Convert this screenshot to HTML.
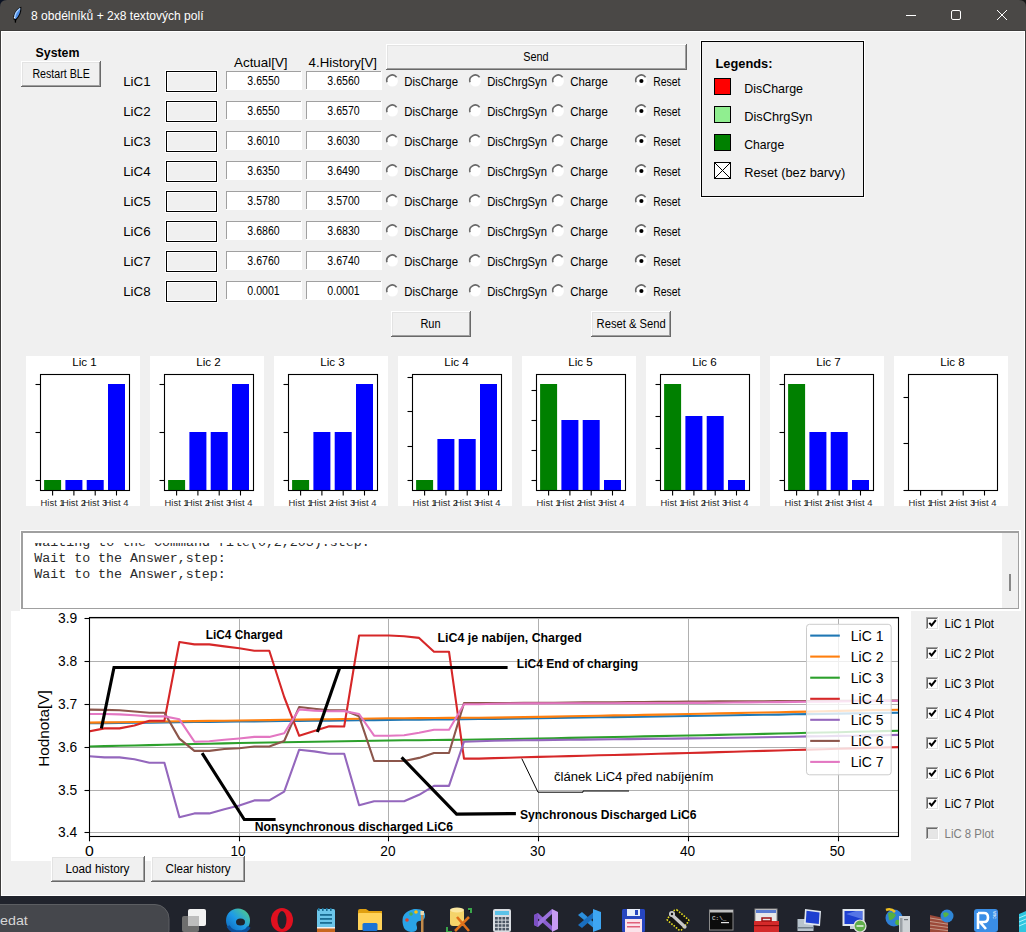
<!DOCTYPE html>
<html><head><meta charset="utf-8"><title>8 obdélníků + 2x8 textových polí</title>
<style>html,body{margin:0;padding:0;width:1026px;height:932px;overflow:hidden;background:#1f2331}svg text{font-family:"Liberation Sans",sans-serif}svg text[font-family="Liberation Mono"]{font-family:"Liberation Mono",monospace}</style>
</head><body>
<svg width="1026" height="932" viewBox="0 0 1026 932" shape-rendering="crispEdges" font-family="Liberation Sans" style="display:block">
<rect x="0" y="0" width="1026" height="932" fill="#1f2331" />
<rect x="0" y="0" width="18" height="18" fill="#0b1222" />
<rect x="1008" y="0" width="18" height="18" fill="#181818" />
<rect x="0" y="8" width="1026" height="888" fill="#3d3c3b" />
<rect x="1" y="31" width="1024" height="865" fill="#ffffff" />
<rect x="2" y="32" width="1022" height="863" fill="#f0f0f0" />
<path d="M0 7 Q0 0 7 0 L1019 0 Q1026 0 1026 7 L1026 30 L0 30 Z" fill="#4a4846" shape-rendering="geometricPrecision"/>
<rect x="0" y="30" width="1026" height="1" fill="#3d3c3b" />
<g shape-rendering="geometricPrecision"><path d="M14.2 19.5 C13 14 16.5 9.5 20.8 7.6 C21.2 12 19 16.5 15.8 19.8 Z" fill="#4f8fe8" stroke="#050505" stroke-width="1.1"/><path d="M14.8 17.5 C15 13.5 17 10.5 20.2 8.4" stroke="#a9d0ff" stroke-width="1.4" fill="none"/><path d="M15.6 19 L15.4 22.6" stroke="#000" stroke-width="1.3"/><circle cx="14.5" cy="17.8" r="0.7" fill="#fff"/></g>
<text x="31" y="19.5" font-size="12.5" fill="#ffffff" textLength="172.5" lengthAdjust="spacingAndGlyphs" >8 obdélníků + 2x8 textových polí</text>
<rect x="906" y="15" width="10" height="1" fill="#ffffff" />
<rect x="951.5" y="10.5" width="9" height="9" rx="1.5" fill="none" stroke="#ffffff" stroke-width="1" shape-rendering="geometricPrecision"/>
<path d="M997 10 L1007 20 M1007 10 L997 20" stroke="#ffffff" stroke-width="1" shape-rendering="geometricPrecision"/>
<text x="35.5" y="57" font-size="13" font-weight="bold" textLength="44" lengthAdjust="spacingAndGlyphs" >System</text>
<rect x="21" y="61" width="80" height="26" fill="#696969" />
<rect x="21" y="61" width="79" height="25" fill="#ffffff" />
<rect x="22" y="62" width="78" height="24" fill="#a0a0a0" />
<rect x="22" y="62" width="77" height="23" fill="#e3e3e3" />
<rect x="23" y="63" width="76" height="22" fill="#f0f0f0" />
<text x="32.4" y="78" font-size="12" textLength="57.5" lengthAdjust="spacingAndGlyphs" >Restart BLE</text>
<text x="234" y="67" font-size="13.33" textLength="53.6" lengthAdjust="spacingAndGlyphs" >Actual[V]</text>
<text x="308.6" y="67" font-size="13.33" textLength="68.4" lengthAdjust="spacingAndGlyphs" >4.History[V]</text>
<rect x="386" y="44" width="301" height="26" fill="#696969" />
<rect x="386" y="44" width="300" height="25" fill="#ffffff" />
<rect x="387" y="45" width="299" height="24" fill="#a0a0a0" />
<rect x="387" y="45" width="298" height="23" fill="#e3e3e3" />
<rect x="388" y="46" width="297" height="22" fill="#f0f0f0" />
<text x="523.2" y="61" font-size="12" textLength="25.4" lengthAdjust="spacingAndGlyphs" >Send</text>
<text x="123.2" y="86" font-size="13.33" >LiC1</text>
<rect x="165" y="70" width="53" height="23" fill="#ffffff" />
<rect x="166" y="71" width="51" height="21" fill="#000000" />
<rect x="167" y="72" width="49" height="19" fill="#ffffff" />
<rect x="168" y="73" width="47" height="17" fill="#f0f0f0" />
<rect x="226" y="71" width="76" height="19" fill="#ffffff" />
<rect x="226" y="71" width="75" height="1" fill="#a0a0a0" />
<rect x="226" y="71" width="1" height="18" fill="#a0a0a0" />
<text x="263.5" y="85" font-size="12" text-anchor="middle" textLength="32.3" lengthAdjust="spacingAndGlyphs" >3.6550</text>
<rect x="306" y="71" width="76" height="19" fill="#ffffff" />
<rect x="306" y="71" width="75" height="1" fill="#a0a0a0" />
<rect x="306" y="71" width="1" height="18" fill="#a0a0a0" />
<text x="343.5" y="85" font-size="12" text-anchor="middle" textLength="32.3" lengthAdjust="spacingAndGlyphs" >3.6560</text>
<g shape-rendering="geometricPrecision"><circle cx="392.4" cy="81" r="5.5" fill="#ffffff"/><path d="M387.0 82.2 A5.5 5.5 0 0 1 396.59999999999997 77.2" fill="none" stroke="#696969" stroke-width="1.6"/>
</g>
<text x="404.2" y="86" font-size="12" textLength="53.8" lengthAdjust="spacingAndGlyphs" >DisCharge</text>
<g shape-rendering="geometricPrecision"><circle cx="475.4" cy="81" r="5.5" fill="#ffffff"/><path d="M470.0 82.2 A5.5 5.5 0 0 1 479.59999999999997 77.2" fill="none" stroke="#696969" stroke-width="1.6"/>
</g>
<text x="487.2" y="86" font-size="12" textLength="59.7" lengthAdjust="spacingAndGlyphs" >DisChrgSyn</text>
<g shape-rendering="geometricPrecision"><circle cx="558.4" cy="81" r="5.5" fill="#ffffff"/><path d="M553.0 82.2 A5.5 5.5 0 0 1 562.6 77.2" fill="none" stroke="#696969" stroke-width="1.6"/>
</g>
<text x="570.2" y="86" font-size="12" textLength="37.6" lengthAdjust="spacingAndGlyphs" >Charge</text>
<g shape-rendering="geometricPrecision"><circle cx="641.4" cy="81" r="5.5" fill="#ffffff"/><path d="M636.0 82.2 A5.5 5.5 0 0 1 645.6 77.2" fill="none" stroke="#696969" stroke-width="1.6"/>
<circle cx="641.4" cy="81" r="2.1" fill="#000"/>
</g>
<text x="653.2" y="86" font-size="12" textLength="27.3" lengthAdjust="spacingAndGlyphs" >Reset</text>
<text x="123.2" y="116" font-size="13.33" >LiC2</text>
<rect x="165" y="100" width="53" height="23" fill="#ffffff" />
<rect x="166" y="101" width="51" height="21" fill="#000000" />
<rect x="167" y="102" width="49" height="19" fill="#ffffff" />
<rect x="168" y="103" width="47" height="17" fill="#f0f0f0" />
<rect x="226" y="101" width="76" height="19" fill="#ffffff" />
<rect x="226" y="101" width="75" height="1" fill="#a0a0a0" />
<rect x="226" y="101" width="1" height="18" fill="#a0a0a0" />
<text x="263.5" y="115" font-size="12" text-anchor="middle" textLength="32.3" lengthAdjust="spacingAndGlyphs" >3.6550</text>
<rect x="306" y="101" width="76" height="19" fill="#ffffff" />
<rect x="306" y="101" width="75" height="1" fill="#a0a0a0" />
<rect x="306" y="101" width="1" height="18" fill="#a0a0a0" />
<text x="343.5" y="115" font-size="12" text-anchor="middle" textLength="32.3" lengthAdjust="spacingAndGlyphs" >3.6570</text>
<g shape-rendering="geometricPrecision"><circle cx="392.4" cy="111" r="5.5" fill="#ffffff"/><path d="M387.0 112.2 A5.5 5.5 0 0 1 396.59999999999997 107.2" fill="none" stroke="#696969" stroke-width="1.6"/>
</g>
<text x="404.2" y="116" font-size="12" textLength="53.8" lengthAdjust="spacingAndGlyphs" >DisCharge</text>
<g shape-rendering="geometricPrecision"><circle cx="475.4" cy="111" r="5.5" fill="#ffffff"/><path d="M470.0 112.2 A5.5 5.5 0 0 1 479.59999999999997 107.2" fill="none" stroke="#696969" stroke-width="1.6"/>
</g>
<text x="487.2" y="116" font-size="12" textLength="59.7" lengthAdjust="spacingAndGlyphs" >DisChrgSyn</text>
<g shape-rendering="geometricPrecision"><circle cx="558.4" cy="111" r="5.5" fill="#ffffff"/><path d="M553.0 112.2 A5.5 5.5 0 0 1 562.6 107.2" fill="none" stroke="#696969" stroke-width="1.6"/>
</g>
<text x="570.2" y="116" font-size="12" textLength="37.6" lengthAdjust="spacingAndGlyphs" >Charge</text>
<g shape-rendering="geometricPrecision"><circle cx="641.4" cy="111" r="5.5" fill="#ffffff"/><path d="M636.0 112.2 A5.5 5.5 0 0 1 645.6 107.2" fill="none" stroke="#696969" stroke-width="1.6"/>
<circle cx="641.4" cy="111" r="2.1" fill="#000"/>
</g>
<text x="653.2" y="116" font-size="12" textLength="27.3" lengthAdjust="spacingAndGlyphs" >Reset</text>
<text x="123.2" y="146" font-size="13.33" >LiC3</text>
<rect x="165" y="130" width="53" height="23" fill="#ffffff" />
<rect x="166" y="131" width="51" height="21" fill="#000000" />
<rect x="167" y="132" width="49" height="19" fill="#ffffff" />
<rect x="168" y="133" width="47" height="17" fill="#f0f0f0" />
<rect x="226" y="131" width="76" height="19" fill="#ffffff" />
<rect x="226" y="131" width="75" height="1" fill="#a0a0a0" />
<rect x="226" y="131" width="1" height="18" fill="#a0a0a0" />
<text x="263.5" y="145" font-size="12" text-anchor="middle" textLength="32.3" lengthAdjust="spacingAndGlyphs" >3.6010</text>
<rect x="306" y="131" width="76" height="19" fill="#ffffff" />
<rect x="306" y="131" width="75" height="1" fill="#a0a0a0" />
<rect x="306" y="131" width="1" height="18" fill="#a0a0a0" />
<text x="343.5" y="145" font-size="12" text-anchor="middle" textLength="32.3" lengthAdjust="spacingAndGlyphs" >3.6030</text>
<g shape-rendering="geometricPrecision"><circle cx="392.4" cy="141" r="5.5" fill="#ffffff"/><path d="M387.0 142.2 A5.5 5.5 0 0 1 396.59999999999997 137.2" fill="none" stroke="#696969" stroke-width="1.6"/>
</g>
<text x="404.2" y="146" font-size="12" textLength="53.8" lengthAdjust="spacingAndGlyphs" >DisCharge</text>
<g shape-rendering="geometricPrecision"><circle cx="475.4" cy="141" r="5.5" fill="#ffffff"/><path d="M470.0 142.2 A5.5 5.5 0 0 1 479.59999999999997 137.2" fill="none" stroke="#696969" stroke-width="1.6"/>
</g>
<text x="487.2" y="146" font-size="12" textLength="59.7" lengthAdjust="spacingAndGlyphs" >DisChrgSyn</text>
<g shape-rendering="geometricPrecision"><circle cx="558.4" cy="141" r="5.5" fill="#ffffff"/><path d="M553.0 142.2 A5.5 5.5 0 0 1 562.6 137.2" fill="none" stroke="#696969" stroke-width="1.6"/>
</g>
<text x="570.2" y="146" font-size="12" textLength="37.6" lengthAdjust="spacingAndGlyphs" >Charge</text>
<g shape-rendering="geometricPrecision"><circle cx="641.4" cy="141" r="5.5" fill="#ffffff"/><path d="M636.0 142.2 A5.5 5.5 0 0 1 645.6 137.2" fill="none" stroke="#696969" stroke-width="1.6"/>
<circle cx="641.4" cy="141" r="2.1" fill="#000"/>
</g>
<text x="653.2" y="146" font-size="12" textLength="27.3" lengthAdjust="spacingAndGlyphs" >Reset</text>
<text x="123.2" y="176" font-size="13.33" >LiC4</text>
<rect x="165" y="160" width="53" height="23" fill="#ffffff" />
<rect x="166" y="161" width="51" height="21" fill="#000000" />
<rect x="167" y="162" width="49" height="19" fill="#ffffff" />
<rect x="168" y="163" width="47" height="17" fill="#f0f0f0" />
<rect x="226" y="161" width="76" height="19" fill="#ffffff" />
<rect x="226" y="161" width="75" height="1" fill="#a0a0a0" />
<rect x="226" y="161" width="1" height="18" fill="#a0a0a0" />
<text x="263.5" y="175" font-size="12" text-anchor="middle" textLength="32.3" lengthAdjust="spacingAndGlyphs" >3.6350</text>
<rect x="306" y="161" width="76" height="19" fill="#ffffff" />
<rect x="306" y="161" width="75" height="1" fill="#a0a0a0" />
<rect x="306" y="161" width="1" height="18" fill="#a0a0a0" />
<text x="343.5" y="175" font-size="12" text-anchor="middle" textLength="32.3" lengthAdjust="spacingAndGlyphs" >3.6490</text>
<g shape-rendering="geometricPrecision"><circle cx="392.4" cy="171" r="5.5" fill="#ffffff"/><path d="M387.0 172.2 A5.5 5.5 0 0 1 396.59999999999997 167.2" fill="none" stroke="#696969" stroke-width="1.6"/>
</g>
<text x="404.2" y="176" font-size="12" textLength="53.8" lengthAdjust="spacingAndGlyphs" >DisCharge</text>
<g shape-rendering="geometricPrecision"><circle cx="475.4" cy="171" r="5.5" fill="#ffffff"/><path d="M470.0 172.2 A5.5 5.5 0 0 1 479.59999999999997 167.2" fill="none" stroke="#696969" stroke-width="1.6"/>
</g>
<text x="487.2" y="176" font-size="12" textLength="59.7" lengthAdjust="spacingAndGlyphs" >DisChrgSyn</text>
<g shape-rendering="geometricPrecision"><circle cx="558.4" cy="171" r="5.5" fill="#ffffff"/><path d="M553.0 172.2 A5.5 5.5 0 0 1 562.6 167.2" fill="none" stroke="#696969" stroke-width="1.6"/>
</g>
<text x="570.2" y="176" font-size="12" textLength="37.6" lengthAdjust="spacingAndGlyphs" >Charge</text>
<g shape-rendering="geometricPrecision"><circle cx="641.4" cy="171" r="5.5" fill="#ffffff"/><path d="M636.0 172.2 A5.5 5.5 0 0 1 645.6 167.2" fill="none" stroke="#696969" stroke-width="1.6"/>
<circle cx="641.4" cy="171" r="2.1" fill="#000"/>
</g>
<text x="653.2" y="176" font-size="12" textLength="27.3" lengthAdjust="spacingAndGlyphs" >Reset</text>
<text x="123.2" y="206" font-size="13.33" >LiC5</text>
<rect x="165" y="190" width="53" height="23" fill="#ffffff" />
<rect x="166" y="191" width="51" height="21" fill="#000000" />
<rect x="167" y="192" width="49" height="19" fill="#ffffff" />
<rect x="168" y="193" width="47" height="17" fill="#f0f0f0" />
<rect x="226" y="191" width="76" height="19" fill="#ffffff" />
<rect x="226" y="191" width="75" height="1" fill="#a0a0a0" />
<rect x="226" y="191" width="1" height="18" fill="#a0a0a0" />
<text x="263.5" y="205" font-size="12" text-anchor="middle" textLength="32.3" lengthAdjust="spacingAndGlyphs" >3.5780</text>
<rect x="306" y="191" width="76" height="19" fill="#ffffff" />
<rect x="306" y="191" width="75" height="1" fill="#a0a0a0" />
<rect x="306" y="191" width="1" height="18" fill="#a0a0a0" />
<text x="343.5" y="205" font-size="12" text-anchor="middle" textLength="32.3" lengthAdjust="spacingAndGlyphs" >3.5700</text>
<g shape-rendering="geometricPrecision"><circle cx="392.4" cy="201" r="5.5" fill="#ffffff"/><path d="M387.0 202.2 A5.5 5.5 0 0 1 396.59999999999997 197.2" fill="none" stroke="#696969" stroke-width="1.6"/>
</g>
<text x="404.2" y="206" font-size="12" textLength="53.8" lengthAdjust="spacingAndGlyphs" >DisCharge</text>
<g shape-rendering="geometricPrecision"><circle cx="475.4" cy="201" r="5.5" fill="#ffffff"/><path d="M470.0 202.2 A5.5 5.5 0 0 1 479.59999999999997 197.2" fill="none" stroke="#696969" stroke-width="1.6"/>
</g>
<text x="487.2" y="206" font-size="12" textLength="59.7" lengthAdjust="spacingAndGlyphs" >DisChrgSyn</text>
<g shape-rendering="geometricPrecision"><circle cx="558.4" cy="201" r="5.5" fill="#ffffff"/><path d="M553.0 202.2 A5.5 5.5 0 0 1 562.6 197.2" fill="none" stroke="#696969" stroke-width="1.6"/>
</g>
<text x="570.2" y="206" font-size="12" textLength="37.6" lengthAdjust="spacingAndGlyphs" >Charge</text>
<g shape-rendering="geometricPrecision"><circle cx="641.4" cy="201" r="5.5" fill="#ffffff"/><path d="M636.0 202.2 A5.5 5.5 0 0 1 645.6 197.2" fill="none" stroke="#696969" stroke-width="1.6"/>
<circle cx="641.4" cy="201" r="2.1" fill="#000"/>
</g>
<text x="653.2" y="206" font-size="12" textLength="27.3" lengthAdjust="spacingAndGlyphs" >Reset</text>
<text x="123.2" y="236" font-size="13.33" >LiC6</text>
<rect x="165" y="220" width="53" height="23" fill="#ffffff" />
<rect x="166" y="221" width="51" height="21" fill="#000000" />
<rect x="167" y="222" width="49" height="19" fill="#ffffff" />
<rect x="168" y="223" width="47" height="17" fill="#f0f0f0" />
<rect x="226" y="221" width="76" height="19" fill="#ffffff" />
<rect x="226" y="221" width="75" height="1" fill="#a0a0a0" />
<rect x="226" y="221" width="1" height="18" fill="#a0a0a0" />
<text x="263.5" y="235" font-size="12" text-anchor="middle" textLength="32.3" lengthAdjust="spacingAndGlyphs" >3.6860</text>
<rect x="306" y="221" width="76" height="19" fill="#ffffff" />
<rect x="306" y="221" width="75" height="1" fill="#a0a0a0" />
<rect x="306" y="221" width="1" height="18" fill="#a0a0a0" />
<text x="343.5" y="235" font-size="12" text-anchor="middle" textLength="32.3" lengthAdjust="spacingAndGlyphs" >3.6830</text>
<g shape-rendering="geometricPrecision"><circle cx="392.4" cy="231" r="5.5" fill="#ffffff"/><path d="M387.0 232.2 A5.5 5.5 0 0 1 396.59999999999997 227.2" fill="none" stroke="#696969" stroke-width="1.6"/>
</g>
<text x="404.2" y="236" font-size="12" textLength="53.8" lengthAdjust="spacingAndGlyphs" >DisCharge</text>
<g shape-rendering="geometricPrecision"><circle cx="475.4" cy="231" r="5.5" fill="#ffffff"/><path d="M470.0 232.2 A5.5 5.5 0 0 1 479.59999999999997 227.2" fill="none" stroke="#696969" stroke-width="1.6"/>
</g>
<text x="487.2" y="236" font-size="12" textLength="59.7" lengthAdjust="spacingAndGlyphs" >DisChrgSyn</text>
<g shape-rendering="geometricPrecision"><circle cx="558.4" cy="231" r="5.5" fill="#ffffff"/><path d="M553.0 232.2 A5.5 5.5 0 0 1 562.6 227.2" fill="none" stroke="#696969" stroke-width="1.6"/>
</g>
<text x="570.2" y="236" font-size="12" textLength="37.6" lengthAdjust="spacingAndGlyphs" >Charge</text>
<g shape-rendering="geometricPrecision"><circle cx="641.4" cy="231" r="5.5" fill="#ffffff"/><path d="M636.0 232.2 A5.5 5.5 0 0 1 645.6 227.2" fill="none" stroke="#696969" stroke-width="1.6"/>
<circle cx="641.4" cy="231" r="2.1" fill="#000"/>
</g>
<text x="653.2" y="236" font-size="12" textLength="27.3" lengthAdjust="spacingAndGlyphs" >Reset</text>
<text x="123.2" y="266" font-size="13.33" >LiC7</text>
<rect x="165" y="250" width="53" height="23" fill="#ffffff" />
<rect x="166" y="251" width="51" height="21" fill="#000000" />
<rect x="167" y="252" width="49" height="19" fill="#ffffff" />
<rect x="168" y="253" width="47" height="17" fill="#f0f0f0" />
<rect x="226" y="251" width="76" height="19" fill="#ffffff" />
<rect x="226" y="251" width="75" height="1" fill="#a0a0a0" />
<rect x="226" y="251" width="1" height="18" fill="#a0a0a0" />
<text x="263.5" y="265" font-size="12" text-anchor="middle" textLength="32.3" lengthAdjust="spacingAndGlyphs" >3.6760</text>
<rect x="306" y="251" width="76" height="19" fill="#ffffff" />
<rect x="306" y="251" width="75" height="1" fill="#a0a0a0" />
<rect x="306" y="251" width="1" height="18" fill="#a0a0a0" />
<text x="343.5" y="265" font-size="12" text-anchor="middle" textLength="32.3" lengthAdjust="spacingAndGlyphs" >3.6740</text>
<g shape-rendering="geometricPrecision"><circle cx="392.4" cy="261" r="5.5" fill="#ffffff"/><path d="M387.0 262.2 A5.5 5.5 0 0 1 396.59999999999997 257.2" fill="none" stroke="#696969" stroke-width="1.6"/>
</g>
<text x="404.2" y="266" font-size="12" textLength="53.8" lengthAdjust="spacingAndGlyphs" >DisCharge</text>
<g shape-rendering="geometricPrecision"><circle cx="475.4" cy="261" r="5.5" fill="#ffffff"/><path d="M470.0 262.2 A5.5 5.5 0 0 1 479.59999999999997 257.2" fill="none" stroke="#696969" stroke-width="1.6"/>
</g>
<text x="487.2" y="266" font-size="12" textLength="59.7" lengthAdjust="spacingAndGlyphs" >DisChrgSyn</text>
<g shape-rendering="geometricPrecision"><circle cx="558.4" cy="261" r="5.5" fill="#ffffff"/><path d="M553.0 262.2 A5.5 5.5 0 0 1 562.6 257.2" fill="none" stroke="#696969" stroke-width="1.6"/>
</g>
<text x="570.2" y="266" font-size="12" textLength="37.6" lengthAdjust="spacingAndGlyphs" >Charge</text>
<g shape-rendering="geometricPrecision"><circle cx="641.4" cy="261" r="5.5" fill="#ffffff"/><path d="M636.0 262.2 A5.5 5.5 0 0 1 645.6 257.2" fill="none" stroke="#696969" stroke-width="1.6"/>
<circle cx="641.4" cy="261" r="2.1" fill="#000"/>
</g>
<text x="653.2" y="266" font-size="12" textLength="27.3" lengthAdjust="spacingAndGlyphs" >Reset</text>
<text x="123.2" y="296" font-size="13.33" >LiC8</text>
<rect x="165" y="280" width="53" height="23" fill="#ffffff" />
<rect x="166" y="281" width="51" height="21" fill="#000000" />
<rect x="167" y="282" width="49" height="19" fill="#ffffff" />
<rect x="168" y="283" width="47" height="17" fill="#f0f0f0" />
<rect x="226" y="281" width="76" height="19" fill="#ffffff" />
<rect x="226" y="281" width="75" height="1" fill="#a0a0a0" />
<rect x="226" y="281" width="1" height="18" fill="#a0a0a0" />
<text x="263.5" y="295" font-size="12" text-anchor="middle" textLength="32.3" lengthAdjust="spacingAndGlyphs" >0.0001</text>
<rect x="306" y="281" width="76" height="19" fill="#ffffff" />
<rect x="306" y="281" width="75" height="1" fill="#a0a0a0" />
<rect x="306" y="281" width="1" height="18" fill="#a0a0a0" />
<text x="343.5" y="295" font-size="12" text-anchor="middle" textLength="32.3" lengthAdjust="spacingAndGlyphs" >0.0001</text>
<g shape-rendering="geometricPrecision"><circle cx="392.4" cy="291" r="5.5" fill="#ffffff"/><path d="M387.0 292.2 A5.5 5.5 0 0 1 396.59999999999997 287.2" fill="none" stroke="#696969" stroke-width="1.6"/>
</g>
<text x="404.2" y="296" font-size="12" textLength="53.8" lengthAdjust="spacingAndGlyphs" >DisCharge</text>
<g shape-rendering="geometricPrecision"><circle cx="475.4" cy="291" r="5.5" fill="#ffffff"/><path d="M470.0 292.2 A5.5 5.5 0 0 1 479.59999999999997 287.2" fill="none" stroke="#696969" stroke-width="1.6"/>
</g>
<text x="487.2" y="296" font-size="12" textLength="59.7" lengthAdjust="spacingAndGlyphs" >DisChrgSyn</text>
<g shape-rendering="geometricPrecision"><circle cx="558.4" cy="291" r="5.5" fill="#ffffff"/><path d="M553.0 292.2 A5.5 5.5 0 0 1 562.6 287.2" fill="none" stroke="#696969" stroke-width="1.6"/>
</g>
<text x="570.2" y="296" font-size="12" textLength="37.6" lengthAdjust="spacingAndGlyphs" >Charge</text>
<g shape-rendering="geometricPrecision"><circle cx="641.4" cy="291" r="5.5" fill="#ffffff"/><path d="M636.0 292.2 A5.5 5.5 0 0 1 645.6 287.2" fill="none" stroke="#696969" stroke-width="1.6"/>
<circle cx="641.4" cy="291" r="2.1" fill="#000"/>
</g>
<text x="653.2" y="296" font-size="12" textLength="27.3" lengthAdjust="spacingAndGlyphs" >Reset</text>
<rect x="391" y="311" width="80" height="26" fill="#696969" />
<rect x="391" y="311" width="79" height="25" fill="#ffffff" />
<rect x="392" y="312" width="78" height="24" fill="#a0a0a0" />
<rect x="392" y="312" width="77" height="23" fill="#e3e3e3" />
<rect x="393" y="313" width="76" height="22" fill="#f0f0f0" />
<text x="420.4" y="328" font-size="12" textLength="20.2" lengthAdjust="spacingAndGlyphs" >Run</text>
<rect x="591" y="311" width="80" height="26" fill="#696969" />
<rect x="591" y="311" width="79" height="25" fill="#ffffff" />
<rect x="592" y="312" width="78" height="24" fill="#a0a0a0" />
<rect x="592" y="312" width="77" height="23" fill="#e3e3e3" />
<rect x="593" y="313" width="76" height="22" fill="#f0f0f0" />
<text x="596.6" y="328" font-size="12" textLength="69.2" lengthAdjust="spacingAndGlyphs" >Reset &amp; Send</text>
<rect x="700" y="40" width="165" height="158" fill="#ffffff" />
<rect x="701" y="41" width="163" height="156" fill="#000000" />
<rect x="702" y="42" width="161" height="154" fill="#f0f0f0" />
<text x="715.5" y="67.7" font-size="13.33" font-weight="bold" textLength="57" lengthAdjust="spacingAndGlyphs" >Legends:</text>
<rect x="714" y="78" width="17" height="17" fill="#000" />
<rect x="715" y="79" width="15" height="15" fill="#ff0000" />
<text x="744.2" y="92.7" font-size="13.33" textLength="58.8" lengthAdjust="spacingAndGlyphs" >DisCharge</text>
<rect x="714" y="106" width="17" height="17" fill="#000" />
<rect x="715" y="107" width="15" height="15" fill="#90ee90" />
<text x="744.2" y="120.7" font-size="13.33" textLength="68.3" lengthAdjust="spacingAndGlyphs" >DisChrgSyn</text>
<rect x="714" y="134" width="17" height="17" fill="#000" />
<rect x="715" y="135" width="15" height="15" fill="#008000" />
<text x="744.2" y="148.7" font-size="13.33" textLength="40" lengthAdjust="spacingAndGlyphs" >Charge</text>
<rect x="714" y="162" width="17" height="17" fill="#000" />
<rect x="715" y="163" width="15" height="15" fill="#ffffff" />
<path d="M715 163 L730 178 M730 163 L715 178" stroke="#000" stroke-width="1" shape-rendering="geometricPrecision"/>
<text x="744.2" y="176.7" font-size="13.33" textLength="101" lengthAdjust="spacingAndGlyphs" >Reset (bez barvy)</text>
<rect x="26" y="356" width="114" height="150" fill="#ffffff" />
<g shape-rendering="geometricPrecision">
<text x="84.5" y="365.8" font-size="10.5" text-anchor="middle" textLength="24.5" lengthAdjust="spacingAndGlyphs" >Lic 1</text>
<rect x="44.1" y="480" width="17" height="10" fill="#008000" />
<rect x="65.4" y="480" width="17" height="10" fill="#0000ff" />
<rect x="86.7" y="480" width="17" height="10" fill="#0000ff" />
<rect x="108.0" y="384" width="17" height="106" fill="#0000ff" />
<rect x="40.5" y="374.5" width="89.0" height="116.0" fill="none" stroke="#000" stroke-width="1.1"/>
<path d="M35.5 384.5 H40.5" stroke="#000" stroke-width="1.1"/>
<path d="M35.5 432.5 H40.5" stroke="#000" stroke-width="1.1"/>
<path d="M35.5 480.5 H40.5" stroke="#000" stroke-width="1.1"/>
<path d="M52.6 490.5 V495.5" stroke="#000" stroke-width="1.1"/>
<text x="52.6" y="505.6" font-size="8.4" text-anchor="middle" fill="#262626" textLength="24" lengthAdjust="spacingAndGlyphs" >Hist 1</text>
<path d="M73.9 490.5 V495.5" stroke="#000" stroke-width="1.1"/>
<text x="73.9" y="505.6" font-size="8.4" text-anchor="middle" fill="#262626" textLength="24" lengthAdjust="spacingAndGlyphs" >Hist 2</text>
<path d="M95.2 490.5 V495.5" stroke="#000" stroke-width="1.1"/>
<text x="95.2" y="505.6" font-size="8.4" text-anchor="middle" fill="#262626" textLength="24" lengthAdjust="spacingAndGlyphs" >Hist 3</text>
<path d="M116.5 490.5 V495.5" stroke="#000" stroke-width="1.1"/>
<text x="116.5" y="505.6" font-size="8.4" text-anchor="middle" fill="#262626" textLength="24" lengthAdjust="spacingAndGlyphs" >Hist 4</text>
</g>
<rect x="150" y="356" width="114" height="150" fill="#ffffff" />
<g shape-rendering="geometricPrecision">
<text x="208.5" y="365.8" font-size="10.5" text-anchor="middle" textLength="24.5" lengthAdjust="spacingAndGlyphs" >Lic 2</text>
<rect x="168.1" y="480" width="17" height="10" fill="#008000" />
<rect x="189.4" y="432" width="17" height="58" fill="#0000ff" />
<rect x="210.7" y="432" width="17" height="58" fill="#0000ff" />
<rect x="232.0" y="384" width="17" height="106" fill="#0000ff" />
<rect x="164.5" y="374.5" width="89.0" height="116.0" fill="none" stroke="#000" stroke-width="1.1"/>
<path d="M159.5 384.5 H164.5" stroke="#000" stroke-width="1.1"/>
<path d="M159.5 432.5 H164.5" stroke="#000" stroke-width="1.1"/>
<path d="M159.5 480.5 H164.5" stroke="#000" stroke-width="1.1"/>
<path d="M176.6 490.5 V495.5" stroke="#000" stroke-width="1.1"/>
<text x="176.6" y="505.6" font-size="8.4" text-anchor="middle" fill="#262626" textLength="24" lengthAdjust="spacingAndGlyphs" >Hist 1</text>
<path d="M197.9 490.5 V495.5" stroke="#000" stroke-width="1.1"/>
<text x="197.9" y="505.6" font-size="8.4" text-anchor="middle" fill="#262626" textLength="24" lengthAdjust="spacingAndGlyphs" >Hist 2</text>
<path d="M219.2 490.5 V495.5" stroke="#000" stroke-width="1.1"/>
<text x="219.2" y="505.6" font-size="8.4" text-anchor="middle" fill="#262626" textLength="24" lengthAdjust="spacingAndGlyphs" >Hist 3</text>
<path d="M240.5 490.5 V495.5" stroke="#000" stroke-width="1.1"/>
<text x="240.5" y="505.6" font-size="8.4" text-anchor="middle" fill="#262626" textLength="24" lengthAdjust="spacingAndGlyphs" >Hist 4</text>
</g>
<rect x="274" y="356" width="114" height="150" fill="#ffffff" />
<g shape-rendering="geometricPrecision">
<text x="332.5" y="365.8" font-size="10.5" text-anchor="middle" textLength="24.5" lengthAdjust="spacingAndGlyphs" >Lic 3</text>
<rect x="292.1" y="480" width="17" height="10" fill="#008000" />
<rect x="313.4" y="432" width="17" height="58" fill="#0000ff" />
<rect x="334.7" y="432" width="17" height="58" fill="#0000ff" />
<rect x="356.0" y="384" width="17" height="106" fill="#0000ff" />
<rect x="288.5" y="374.5" width="89.0" height="116.0" fill="none" stroke="#000" stroke-width="1.1"/>
<path d="M283.5 384.5 H288.5" stroke="#000" stroke-width="1.1"/>
<path d="M283.5 432.5 H288.5" stroke="#000" stroke-width="1.1"/>
<path d="M283.5 480.5 H288.5" stroke="#000" stroke-width="1.1"/>
<path d="M300.6 490.5 V495.5" stroke="#000" stroke-width="1.1"/>
<text x="300.6" y="505.6" font-size="8.4" text-anchor="middle" fill="#262626" textLength="24" lengthAdjust="spacingAndGlyphs" >Hist 1</text>
<path d="M321.9 490.5 V495.5" stroke="#000" stroke-width="1.1"/>
<text x="321.9" y="505.6" font-size="8.4" text-anchor="middle" fill="#262626" textLength="24" lengthAdjust="spacingAndGlyphs" >Hist 2</text>
<path d="M343.2 490.5 V495.5" stroke="#000" stroke-width="1.1"/>
<text x="343.2" y="505.6" font-size="8.4" text-anchor="middle" fill="#262626" textLength="24" lengthAdjust="spacingAndGlyphs" >Hist 3</text>
<path d="M364.5 490.5 V495.5" stroke="#000" stroke-width="1.1"/>
<text x="364.5" y="505.6" font-size="8.4" text-anchor="middle" fill="#262626" textLength="24" lengthAdjust="spacingAndGlyphs" >Hist 4</text>
</g>
<rect x="398" y="356" width="114" height="150" fill="#ffffff" />
<g shape-rendering="geometricPrecision">
<text x="456.5" y="365.8" font-size="10.5" text-anchor="middle" textLength="24.5" lengthAdjust="spacingAndGlyphs" >Lic 4</text>
<rect x="416.1" y="480" width="17" height="10" fill="#008000" />
<rect x="437.4" y="439" width="17" height="51" fill="#0000ff" />
<rect x="458.7" y="439" width="17" height="51" fill="#0000ff" />
<rect x="480.0" y="384" width="17" height="106" fill="#0000ff" />
<rect x="412.5" y="374.5" width="89.0" height="116.0" fill="none" stroke="#000" stroke-width="1.1"/>
<path d="M407.5 377.5 H412.5" stroke="#000" stroke-width="1.1"/>
<path d="M407.5 411.5 H412.5" stroke="#000" stroke-width="1.1"/>
<path d="M407.5 446.5 H412.5" stroke="#000" stroke-width="1.1"/>
<path d="M407.5 480.5 H412.5" stroke="#000" stroke-width="1.1"/>
<path d="M424.6 490.5 V495.5" stroke="#000" stroke-width="1.1"/>
<text x="424.6" y="505.6" font-size="8.4" text-anchor="middle" fill="#262626" textLength="24" lengthAdjust="spacingAndGlyphs" >Hist 1</text>
<path d="M445.9 490.5 V495.5" stroke="#000" stroke-width="1.1"/>
<text x="445.9" y="505.6" font-size="8.4" text-anchor="middle" fill="#262626" textLength="24" lengthAdjust="spacingAndGlyphs" >Hist 2</text>
<path d="M467.2 490.5 V495.5" stroke="#000" stroke-width="1.1"/>
<text x="467.2" y="505.6" font-size="8.4" text-anchor="middle" fill="#262626" textLength="24" lengthAdjust="spacingAndGlyphs" >Hist 3</text>
<path d="M488.5 490.5 V495.5" stroke="#000" stroke-width="1.1"/>
<text x="488.5" y="505.6" font-size="8.4" text-anchor="middle" fill="#262626" textLength="24" lengthAdjust="spacingAndGlyphs" >Hist 4</text>
</g>
<rect x="522" y="356" width="114" height="150" fill="#ffffff" />
<g shape-rendering="geometricPrecision">
<text x="580.5" y="365.8" font-size="10.5" text-anchor="middle" textLength="24.5" lengthAdjust="spacingAndGlyphs" >Lic 5</text>
<rect x="540.1" y="384" width="17" height="106" fill="#008000" />
<rect x="561.4" y="420" width="17" height="70" fill="#0000ff" />
<rect x="582.7" y="420" width="17" height="70" fill="#0000ff" />
<rect x="604.0" y="480" width="17" height="10" fill="#0000ff" />
<rect x="536.5" y="374.5" width="89.0" height="116.0" fill="none" stroke="#000" stroke-width="1.1"/>
<path d="M531.5 390.5 H536.5" stroke="#000" stroke-width="1.1"/>
<path d="M531.5 420.5 H536.5" stroke="#000" stroke-width="1.1"/>
<path d="M531.5 450.5 H536.5" stroke="#000" stroke-width="1.1"/>
<path d="M531.5 480.5 H536.5" stroke="#000" stroke-width="1.1"/>
<path d="M548.6 490.5 V495.5" stroke="#000" stroke-width="1.1"/>
<text x="548.6" y="505.6" font-size="8.4" text-anchor="middle" fill="#262626" textLength="24" lengthAdjust="spacingAndGlyphs" >Hist 1</text>
<path d="M569.9 490.5 V495.5" stroke="#000" stroke-width="1.1"/>
<text x="569.9" y="505.6" font-size="8.4" text-anchor="middle" fill="#262626" textLength="24" lengthAdjust="spacingAndGlyphs" >Hist 2</text>
<path d="M591.2 490.5 V495.5" stroke="#000" stroke-width="1.1"/>
<text x="591.2" y="505.6" font-size="8.4" text-anchor="middle" fill="#262626" textLength="24" lengthAdjust="spacingAndGlyphs" >Hist 3</text>
<path d="M612.5 490.5 V495.5" stroke="#000" stroke-width="1.1"/>
<text x="612.5" y="505.6" font-size="8.4" text-anchor="middle" fill="#262626" textLength="24" lengthAdjust="spacingAndGlyphs" >Hist 4</text>
</g>
<rect x="646" y="356" width="114" height="150" fill="#ffffff" />
<g shape-rendering="geometricPrecision">
<text x="704.5" y="365.8" font-size="10.5" text-anchor="middle" textLength="24.5" lengthAdjust="spacingAndGlyphs" >Lic 6</text>
<rect x="664.1" y="384" width="17" height="106" fill="#008000" />
<rect x="685.4" y="416" width="17" height="74" fill="#0000ff" />
<rect x="706.7" y="416" width="17" height="74" fill="#0000ff" />
<rect x="728.0" y="480" width="17" height="10" fill="#0000ff" />
<rect x="660.5" y="374.5" width="89.0" height="116.0" fill="none" stroke="#000" stroke-width="1.1"/>
<path d="M655.5 384.5 H660.5" stroke="#000" stroke-width="1.1"/>
<path d="M655.5 416.5 H660.5" stroke="#000" stroke-width="1.1"/>
<path d="M655.5 448.5 H660.5" stroke="#000" stroke-width="1.1"/>
<path d="M655.5 480.5 H660.5" stroke="#000" stroke-width="1.1"/>
<path d="M672.6 490.5 V495.5" stroke="#000" stroke-width="1.1"/>
<text x="672.6" y="505.6" font-size="8.4" text-anchor="middle" fill="#262626" textLength="24" lengthAdjust="spacingAndGlyphs" >Hist 1</text>
<path d="M693.9 490.5 V495.5" stroke="#000" stroke-width="1.1"/>
<text x="693.9" y="505.6" font-size="8.4" text-anchor="middle" fill="#262626" textLength="24" lengthAdjust="spacingAndGlyphs" >Hist 2</text>
<path d="M715.2 490.5 V495.5" stroke="#000" stroke-width="1.1"/>
<text x="715.2" y="505.6" font-size="8.4" text-anchor="middle" fill="#262626" textLength="24" lengthAdjust="spacingAndGlyphs" >Hist 3</text>
<path d="M736.5 490.5 V495.5" stroke="#000" stroke-width="1.1"/>
<text x="736.5" y="505.6" font-size="8.4" text-anchor="middle" fill="#262626" textLength="24" lengthAdjust="spacingAndGlyphs" >Hist 4</text>
</g>
<rect x="770" y="356" width="114" height="150" fill="#ffffff" />
<g shape-rendering="geometricPrecision">
<text x="828.5" y="365.8" font-size="10.5" text-anchor="middle" textLength="24.5" lengthAdjust="spacingAndGlyphs" >Lic 7</text>
<rect x="788.1" y="384" width="17" height="106" fill="#008000" />
<rect x="809.4" y="432" width="17" height="58" fill="#0000ff" />
<rect x="830.7" y="432" width="17" height="58" fill="#0000ff" />
<rect x="852.0" y="480" width="17" height="10" fill="#0000ff" />
<rect x="784.5" y="374.5" width="89.0" height="116.0" fill="none" stroke="#000" stroke-width="1.1"/>
<path d="M779.5 384.5 H784.5" stroke="#000" stroke-width="1.1"/>
<path d="M779.5 432.5 H784.5" stroke="#000" stroke-width="1.1"/>
<path d="M779.5 480.5 H784.5" stroke="#000" stroke-width="1.1"/>
<path d="M796.6 490.5 V495.5" stroke="#000" stroke-width="1.1"/>
<text x="796.6" y="505.6" font-size="8.4" text-anchor="middle" fill="#262626" textLength="24" lengthAdjust="spacingAndGlyphs" >Hist 1</text>
<path d="M817.9 490.5 V495.5" stroke="#000" stroke-width="1.1"/>
<text x="817.9" y="505.6" font-size="8.4" text-anchor="middle" fill="#262626" textLength="24" lengthAdjust="spacingAndGlyphs" >Hist 2</text>
<path d="M839.2 490.5 V495.5" stroke="#000" stroke-width="1.1"/>
<text x="839.2" y="505.6" font-size="8.4" text-anchor="middle" fill="#262626" textLength="24" lengthAdjust="spacingAndGlyphs" >Hist 3</text>
<path d="M860.5 490.5 V495.5" stroke="#000" stroke-width="1.1"/>
<text x="860.5" y="505.6" font-size="8.4" text-anchor="middle" fill="#262626" textLength="24" lengthAdjust="spacingAndGlyphs" >Hist 4</text>
</g>
<rect x="894" y="356" width="114" height="150" fill="#ffffff" />
<g shape-rendering="geometricPrecision">
<text x="952.5" y="365.8" font-size="10.5" text-anchor="middle" textLength="24.5" lengthAdjust="spacingAndGlyphs" >Lic 8</text>
<rect x="908.5" y="374.5" width="89.0" height="116.0" fill="none" stroke="#000" stroke-width="1.1"/>
<path d="M903.5 397.5 H908.5" stroke="#000" stroke-width="1.1"/>
<path d="M903.5 443.5 H908.5" stroke="#000" stroke-width="1.1"/>
<path d="M903.5 490.5 H908.5" stroke="#000" stroke-width="1.1"/>
<path d="M920.6 490.5 V495.5" stroke="#000" stroke-width="1.1"/>
<text x="920.6" y="505.6" font-size="8.4" text-anchor="middle" fill="#262626" textLength="24" lengthAdjust="spacingAndGlyphs" >Hist 1</text>
<path d="M941.9 490.5 V495.5" stroke="#000" stroke-width="1.1"/>
<text x="941.9" y="505.6" font-size="8.4" text-anchor="middle" fill="#262626" textLength="24" lengthAdjust="spacingAndGlyphs" >Hist 2</text>
<path d="M963.2 490.5 V495.5" stroke="#000" stroke-width="1.1"/>
<text x="963.2" y="505.6" font-size="8.4" text-anchor="middle" fill="#262626" textLength="24" lengthAdjust="spacingAndGlyphs" >Hist 3</text>
<path d="M984.5 490.5 V495.5" stroke="#000" stroke-width="1.1"/>
<text x="984.5" y="505.6" font-size="8.4" text-anchor="middle" fill="#262626" textLength="24" lengthAdjust="spacingAndGlyphs" >Hist 4</text>
</g>
<rect x="20" y="530" width="1001" height="81" fill="#ffffff" />
<rect x="21" y="531" width="998" height="2" fill="#a0a0a0" />
<rect x="21" y="531" width="2" height="78" fill="#a0a0a0" />
<rect x="21" y="608" width="998" height="1" fill="#a0a0a0" />
<rect x="1018" y="531" width="1" height="78" fill="#a0a0a0" />
<rect x="1002" y="533" width="16" height="75" fill="#f0f0f0" />
<rect x="1009" y="574" width="2" height="17" fill="#888888" />
<defs><clipPath id="logclip"><rect x="23" y="543" width="979" height="65"/></clipPath></defs>
<g clip-path="url(#logclip)" shape-rendering="geometricPrecision">
<text x="34.3" y="546.3" font-size="12" font-family="Liberation Mono" fill="#2a2a2a" textLength="335.4" lengthAdjust="spacingAndGlyphs" >Waiting to the Command file(0,2,203).step:</text>
<text x="34.3" y="562" font-size="12" font-family="Liberation Mono" fill="#2a2a2a" textLength="191.4" lengthAdjust="spacingAndGlyphs" >Wait to the Answer,step:</text>
<text x="34.3" y="578" font-size="12" font-family="Liberation Mono" fill="#2a2a2a" textLength="191.4" lengthAdjust="spacingAndGlyphs" >Wait to the Answer,step:</text>
</g>
<rect x="11" y="611" width="900" height="250" fill="#ffffff" />
<g shape-rendering="geometricPrecision">
<path d="M239.5 617.5 V836.5" stroke="#b0b0b0" stroke-width="1"/>
<path d="M388.5 617.5 V836.5" stroke="#b0b0b0" stroke-width="1"/>
<path d="M538.5 617.5 V836.5" stroke="#b0b0b0" stroke-width="1"/>
<path d="M688.5 617.5 V836.5" stroke="#b0b0b0" stroke-width="1"/>
<path d="M838.5 617.5 V836.5" stroke="#b0b0b0" stroke-width="1"/>
<path d="M89.5 618.5 H898.5" stroke="#b0b0b0" stroke-width="1"/>
<path d="M89.5 661.5 H898.5" stroke="#b0b0b0" stroke-width="1"/>
<path d="M89.5 704.5 H898.5" stroke="#b0b0b0" stroke-width="1"/>
<path d="M89.5 747.5 H898.5" stroke="#b0b0b0" stroke-width="1"/>
<path d="M89.5 790.5 H898.5" stroke="#b0b0b0" stroke-width="1"/>
<path d="M89.5 832.5 H898.5" stroke="#b0b0b0" stroke-width="1"/>
<defs><clipPath id="axclip"><rect x="89.5" y="617.7" width="808.9" height="218.7"/></clipPath></defs>
<g clip-path="url(#axclip)">
<polyline points="89.5,723.3 104.5,723.1 119.5,722.9 134.4,722.8 149.4,722.6 164.4,722.4 179.4,722.2 194.4,722.0 209.3,721.9 224.3,721.7 239.3,721.5 254.3,721.4 269.3,721.2 284.2,721.0 299.2,720.9 314.2,720.8 329.2,720.6 344.2,720.5 359.1,720.3 374.1,720.1 389.1,720.0 404.1,719.8 419.1,719.7 434.0,719.5 449.0,719.4 464.0,719.2 479.0,719.0 494.0,718.9 508.9,718.7 523.9,718.4 538.9,718.2 553.9,718.0 568.9,717.8 583.8,717.5 598.8,717.3 613.8,717.1 628.8,716.9 643.8,716.7 658.7,716.4 673.7,716.2 688.7,716.0 703.7,715.8 718.7,715.5 733.6,715.3 748.6,715.0 763.6,714.8 778.6,714.6 793.6,714.3 808.5,714.1 823.5,713.9 838.5,713.6 853.5,713.4 868.5,713.2 883.4,712.9 898.4,712.7" fill="none" stroke="#1f77b4" stroke-width="2.1" stroke-linejoin="round" stroke-linecap="square"/>
<polyline points="89.5,722.6 104.5,722.4 119.5,722.2 134.4,722.0 149.4,721.8 164.4,721.5 179.4,721.3 194.4,721.1 209.3,720.9 224.3,720.7 239.3,720.5 254.3,720.3 269.3,720.1 284.2,719.8 299.2,719.6 314.2,719.4 329.2,719.2 344.2,719.0 359.1,718.7 374.1,718.5 389.1,718.3 404.1,718.2 419.1,718.1 434.0,718.0 449.0,717.9 464.0,717.8 479.0,717.7 494.0,717.6 508.9,717.4 523.9,717.1 538.9,716.9 553.9,716.6 568.9,716.3 583.8,716.0 598.8,715.7 613.8,715.4 628.8,715.2 643.8,714.9 658.7,714.6 673.7,714.3 688.7,714.0 703.7,713.7 718.7,713.4 733.6,713.1 748.6,712.8 763.6,712.5 778.6,712.2 793.6,711.9 808.5,711.6 823.5,711.3 838.5,710.9 853.5,710.6 868.5,710.3 883.4,710.0 898.4,709.7" fill="none" stroke="#ff7f0e" stroke-width="2.1" stroke-linejoin="round" stroke-linecap="square"/>
<polyline points="89.5,746.5 104.5,746.1 119.5,745.8 134.4,745.5 149.4,745.1 164.4,744.8 179.4,744.4 194.4,744.0 209.3,743.7 224.3,743.4 239.3,743.0 254.3,742.8 269.3,742.5 284.2,742.2 299.2,742.0 314.2,741.8 329.2,741.5 344.2,741.2 359.1,741.0 374.1,740.8 389.1,740.5 404.1,740.3 419.1,740.2 434.0,740.0 449.0,739.9 464.0,739.7 479.0,739.5 494.0,739.4 508.9,739.1 523.9,738.8 538.9,738.5 553.9,738.2 568.9,737.9 583.8,737.6 598.8,737.3 613.8,737.0 628.8,736.7 643.8,736.4 658.7,736.1 673.7,735.8 688.7,735.5 703.7,735.2 718.7,734.9 733.6,734.5 748.6,734.2 763.6,733.9 778.6,733.5 793.6,733.2 808.5,732.8 823.5,732.5 838.5,732.2 853.5,731.8 868.5,731.5 883.4,731.1 898.4,730.8" fill="none" stroke="#2ca02c" stroke-width="2.1" stroke-linejoin="round" stroke-linecap="square"/>
<polyline points="89.5,731.3 104.5,728.4 119.5,728.4 134.4,725.5 149.4,720.7 164.4,720.7 179.4,642.0 194.4,644.4 209.3,644.4 224.3,646.4 239.3,648.2 254.3,650.8 269.3,650.8 284.2,697.0 299.2,735.8 314.2,731.1 329.2,726.3 344.2,726.5 359.1,635.5 374.1,635.5 389.1,635.5 404.1,636.2 419.1,637.9 434.0,651.7 449.0,651.7 464.0,758.6 479.0,758.6 494.0,758.1 508.9,757.7 523.9,757.3 538.9,756.9 553.9,756.5 568.9,756.1 583.8,755.7 598.8,755.3 613.8,755.0 628.8,754.6 643.8,754.2 658.7,753.8 673.7,753.4 688.7,753.0 703.7,752.6 718.7,752.1 733.6,751.7 748.6,751.3 763.6,750.9 778.6,750.5 793.6,750.0 808.5,749.6 823.5,749.2 838.5,748.8 853.5,748.4 868.5,747.9 883.4,747.5 898.4,747.1" fill="none" stroke="#d62728" stroke-width="2.1" stroke-linejoin="round" stroke-linecap="square"/>
<polyline points="89.5,756.2 104.5,757.4 119.5,757.4 134.4,759.3 149.4,762.7 164.4,762.7 179.4,817.3 194.4,813.4 209.3,813.4 224.3,809.3 239.3,805.5 254.3,800.4 269.3,800.4 284.2,791.7 299.2,749.7 314.2,751.4 329.2,753.8 344.2,753.8 359.1,805.2 374.1,801.3 389.1,801.3 404.1,801.3 419.1,794.8 434.0,785.9 449.0,785.9 464.0,741.7 479.0,741.2 494.0,740.7 508.9,740.4 523.9,740.2 538.9,740.1 553.9,739.9 568.9,739.7 583.8,739.6 598.8,739.4 613.8,739.3 628.8,739.1 643.8,738.9 658.7,738.8 673.7,738.6 688.7,738.4 703.7,738.2 718.7,738.0 733.6,737.7 748.6,737.5 763.6,737.2 778.6,737.0 793.6,736.7 808.5,736.4 823.5,736.2 838.5,735.9 853.5,735.7 868.5,735.4 883.4,735.2 898.4,734.9" fill="none" stroke="#9467bd" stroke-width="2.1" stroke-linejoin="round" stroke-linecap="square"/>
<polyline points="89.5,709.6 104.5,709.9 119.5,710.3 134.4,711.5 149.4,712.8 164.4,712.8 179.4,738.6 194.4,750.9 209.3,750.9 224.3,749.0 239.3,748.2 254.3,746.5 269.3,746.5 284.2,741.0 299.2,707.0 314.2,708.8 329.2,710.4 344.2,710.3 359.1,716.4 374.1,761.0 389.1,761.0 404.1,761.0 419.1,757.9 434.0,753.0 449.0,753.0 464.0,703.1 479.0,703.1 494.0,703.1 508.9,703.0 523.9,702.9 538.9,702.8 553.9,702.7 568.9,702.6 583.8,702.4 598.8,702.3 613.8,702.2 628.8,702.1 643.8,702.0 658.7,701.8 673.7,701.7 688.7,701.6 703.7,701.5 718.7,701.4 733.6,701.3 748.6,701.3 763.6,701.2 778.6,701.1 793.6,701.0 808.5,701.0 823.5,700.9 838.5,700.8 853.5,700.7 868.5,700.7 883.4,700.6 898.4,700.5" fill="none" stroke="#8c564b" stroke-width="2.1" stroke-linejoin="round" stroke-linecap="square"/>
<polyline points="89.5,714.0 104.5,714.0 119.5,714.4 134.4,715.2 149.4,716.4 164.4,716.4 179.4,719.3 194.4,741.7 209.3,741.2 224.3,739.8 239.3,738.5 254.3,736.9 269.3,736.9 284.2,733.2 299.2,709.4 314.2,710.6 329.2,711.2 344.2,711.1 359.1,714.0 374.1,735.7 389.1,735.7 404.1,735.2 419.1,732.8 434.0,729.7 449.0,729.7 464.0,704.3 479.0,704.2 494.0,703.7 508.9,703.5 523.9,703.4 538.9,703.4 553.9,703.3 568.9,703.3 583.8,703.2 598.8,703.2 613.8,703.2 628.8,703.1 643.8,703.1 658.7,703.0 673.7,703.0 688.7,702.9 703.7,702.9 718.7,702.7 733.6,702.5 748.6,702.4 763.6,702.2 778.6,702.1 793.6,701.9 808.5,701.8 823.5,701.6 838.5,701.4 853.5,701.3 868.5,701.1 883.4,701.0 898.4,700.8" fill="none" stroke="#e377c2" stroke-width="2.1" stroke-linejoin="round" stroke-linecap="square"/>
</g>
<polyline points="101.4,728.4 114,667.5 507.6,667.5" fill="none" stroke="#000" stroke-width="3.1" stroke-linejoin="miter"/>
<polyline points="317.4,732.1 339.8,667.6" fill="none" stroke="#000" stroke-width="3.1" stroke-linejoin="miter"/>
<polyline points="202.1,753.1 244.3,819.5 275.6,819.5" fill="none" stroke="#000" stroke-width="3.1" stroke-linejoin="miter"/>
<polyline points="401.6,757.4 456.6,814.1 515.9,813.6" fill="none" stroke="#000" stroke-width="3.1" stroke-linejoin="miter"/>
<polyline points="521.8,758.6 538,792.2 583,792.2 583,791 629,791" fill="none" stroke="#000" stroke-width="1"/>
<text x="205.7" y="638.5" font-size="12.3" font-weight="bold" textLength="77" lengthAdjust="spacingAndGlyphs" >LiC4 Charged</text>
<text x="437.5" y="641.9" font-size="12.3" font-weight="bold" textLength="144.3" lengthAdjust="spacingAndGlyphs" >LiC4 je nabíjen, Charged</text>
<text x="516.8" y="668.1" font-size="12.3" font-weight="bold" textLength="121.2" lengthAdjust="spacingAndGlyphs" >LiC4 End of charging</text>
<text x="254.7" y="830.7" font-size="12.3" font-weight="bold" textLength="198.3" lengthAdjust="spacingAndGlyphs" >Nonsynchronous discharged LiC6</text>
<text x="520" y="819" font-size="12.3" font-weight="bold" textLength="176.5" lengthAdjust="spacingAndGlyphs" >Synchronous Discharged LiC6</text>
<text x="554" y="781.1" font-size="12.3" textLength="159.3" lengthAdjust="spacingAndGlyphs" >článek LiC4 před nabíjením</text>
<rect x="89.5" y="617.5" width="809.0" height="219.0" fill="none" stroke="#000" stroke-width="1.1"/>
<path d="M84.5 618.5 H89.5" stroke="#000" stroke-width="1.1"/>
<text x="77.2" y="622.8" font-size="13.8" text-anchor="end" textLength="19.2" lengthAdjust="spacingAndGlyphs" >3.9</text>
<path d="M84.5 661.5 H89.5" stroke="#000" stroke-width="1.1"/>
<text x="77.2" y="665.8" font-size="13.8" text-anchor="end" textLength="19.2" lengthAdjust="spacingAndGlyphs" >3.8</text>
<path d="M84.5 704.5 H89.5" stroke="#000" stroke-width="1.1"/>
<text x="77.2" y="708.8" font-size="13.8" text-anchor="end" textLength="19.2" lengthAdjust="spacingAndGlyphs" >3.7</text>
<path d="M84.5 747.5 H89.5" stroke="#000" stroke-width="1.1"/>
<text x="77.2" y="751.8" font-size="13.8" text-anchor="end" textLength="19.2" lengthAdjust="spacingAndGlyphs" >3.6</text>
<path d="M84.5 790.5 H89.5" stroke="#000" stroke-width="1.1"/>
<text x="77.2" y="794.8" font-size="13.8" text-anchor="end" textLength="19.2" lengthAdjust="spacingAndGlyphs" >3.5</text>
<path d="M84.5 832.5 H89.5" stroke="#000" stroke-width="1.1"/>
<text x="77.2" y="836.8" font-size="13.8" text-anchor="end" textLength="19.2" lengthAdjust="spacingAndGlyphs" >3.4</text>
<path d="M89.5 836.5 V841.3" stroke="#000" stroke-width="1.1"/>
<text x="89.5" y="855.8" font-size="13.8" text-anchor="middle" textLength="8.8" lengthAdjust="spacingAndGlyphs" >0</text>
<path d="M239.5 836.5 V841.3" stroke="#000" stroke-width="1.1"/>
<text x="238.1" y="855.8" font-size="13.8" text-anchor="middle" textLength="15.2" lengthAdjust="spacingAndGlyphs" >10</text>
<path d="M388.5 836.5 V841.3" stroke="#000" stroke-width="1.1"/>
<text x="387.9" y="855.8" font-size="13.8" text-anchor="middle" textLength="15.2" lengthAdjust="spacingAndGlyphs" >20</text>
<path d="M538.5 836.5 V841.3" stroke="#000" stroke-width="1.1"/>
<text x="537.7" y="855.8" font-size="13.8" text-anchor="middle" textLength="15.2" lengthAdjust="spacingAndGlyphs" >30</text>
<path d="M688.5 836.5 V841.3" stroke="#000" stroke-width="1.1"/>
<text x="687.5" y="855.8" font-size="13.8" text-anchor="middle" textLength="15.2" lengthAdjust="spacingAndGlyphs" >40</text>
<path d="M838.5 836.5 V841.3" stroke="#000" stroke-width="1.1"/>
<text x="837.3" y="855.8" font-size="13.8" text-anchor="middle" textLength="15.2" lengthAdjust="spacingAndGlyphs" >50</text>
<text x="49.2" y="728.5" font-size="14" text-anchor="middle" fill="#000" textLength="76.7" lengthAdjust="spacingAndGlyphs" transform="rotate(-90 49.2 728.5)">Hodnota[V]</text>
<rect x="806.5" y="624.3" width="84.7" height="150.5" rx="3" fill="#ffffff" fill-opacity="0.8" stroke="#cccccc" stroke-width="1"/>
<path d="M810.2 635.6 H839.8" stroke="#1f77b4" stroke-width="2.1"/>
<text x="850.8" y="640.9" font-size="14" textLength="32.7" lengthAdjust="spacingAndGlyphs" >LiC 1</text>
<path d="M810.2 656.6 H839.8" stroke="#ff7f0e" stroke-width="2.1"/>
<text x="850.8" y="661.9" font-size="14" textLength="32.7" lengthAdjust="spacingAndGlyphs" >LiC 2</text>
<path d="M810.2 677.7 H839.8" stroke="#2ca02c" stroke-width="2.1"/>
<text x="850.8" y="683.0" font-size="14" textLength="32.7" lengthAdjust="spacingAndGlyphs" >LiC 3</text>
<path d="M810.2 698.8 H839.8" stroke="#d62728" stroke-width="2.1"/>
<text x="850.8" y="704.0" font-size="14" textLength="32.7" lengthAdjust="spacingAndGlyphs" >LiC 4</text>
<path d="M810.2 719.8 H839.8" stroke="#9467bd" stroke-width="2.1"/>
<text x="850.8" y="725.1" font-size="14" textLength="32.7" lengthAdjust="spacingAndGlyphs" >LiC 5</text>
<path d="M810.2 740.9 H839.8" stroke="#8c564b" stroke-width="2.1"/>
<text x="850.8" y="746.1" font-size="14" textLength="32.7" lengthAdjust="spacingAndGlyphs" >LiC 6</text>
<path d="M810.2 761.9 H839.8" stroke="#e377c2" stroke-width="2.1"/>
<text x="850.8" y="767.2" font-size="14" textLength="32.7" lengthAdjust="spacingAndGlyphs" >LiC 7</text>
</g>
<rect x="926" y="617" width="13" height="13" fill="#ffffff" />
<rect x="926" y="617" width="12" height="1" fill="#a0a0a0" />
<rect x="926" y="617" width="1" height="12" fill="#a0a0a0" />
<rect x="927" y="618" width="10" height="1" fill="#696969" />
<rect x="927" y="618" width="1" height="10" fill="#696969" />
<rect x="927" y="628" width="11" height="1" fill="#e3e3e3" />
<rect x="937" y="618" width="1" height="11" fill="#e3e3e3" />
<rect x="928" y="619" width="9" height="9" fill="#ffffff" />
<path d="M929.3 622.8 L931.6 625.4 L935.8 620.2" fill="none" stroke="#000" stroke-width="2" shape-rendering="geometricPrecision"/>
<text x="944.6" y="628" font-size="12" textLength="49.3" lengthAdjust="spacingAndGlyphs" >LiC 1 Plot</text>
<rect x="926" y="647" width="13" height="13" fill="#ffffff" />
<rect x="926" y="647" width="12" height="1" fill="#a0a0a0" />
<rect x="926" y="647" width="1" height="12" fill="#a0a0a0" />
<rect x="927" y="648" width="10" height="1" fill="#696969" />
<rect x="927" y="648" width="1" height="10" fill="#696969" />
<rect x="927" y="658" width="11" height="1" fill="#e3e3e3" />
<rect x="937" y="648" width="1" height="11" fill="#e3e3e3" />
<rect x="928" y="649" width="9" height="9" fill="#ffffff" />
<path d="M929.3 652.8 L931.6 655.4 L935.8 650.2" fill="none" stroke="#000" stroke-width="2" shape-rendering="geometricPrecision"/>
<text x="944.6" y="658" font-size="12" textLength="49.3" lengthAdjust="spacingAndGlyphs" >LiC 2 Plot</text>
<rect x="926" y="677" width="13" height="13" fill="#ffffff" />
<rect x="926" y="677" width="12" height="1" fill="#a0a0a0" />
<rect x="926" y="677" width="1" height="12" fill="#a0a0a0" />
<rect x="927" y="678" width="10" height="1" fill="#696969" />
<rect x="927" y="678" width="1" height="10" fill="#696969" />
<rect x="927" y="688" width="11" height="1" fill="#e3e3e3" />
<rect x="937" y="678" width="1" height="11" fill="#e3e3e3" />
<rect x="928" y="679" width="9" height="9" fill="#ffffff" />
<path d="M929.3 682.8 L931.6 685.4 L935.8 680.2" fill="none" stroke="#000" stroke-width="2" shape-rendering="geometricPrecision"/>
<text x="944.6" y="688" font-size="12" textLength="49.3" lengthAdjust="spacingAndGlyphs" >LiC 3 Plot</text>
<rect x="926" y="707" width="13" height="13" fill="#ffffff" />
<rect x="926" y="707" width="12" height="1" fill="#a0a0a0" />
<rect x="926" y="707" width="1" height="12" fill="#a0a0a0" />
<rect x="927" y="708" width="10" height="1" fill="#696969" />
<rect x="927" y="708" width="1" height="10" fill="#696969" />
<rect x="927" y="718" width="11" height="1" fill="#e3e3e3" />
<rect x="937" y="708" width="1" height="11" fill="#e3e3e3" />
<rect x="928" y="709" width="9" height="9" fill="#ffffff" />
<path d="M929.3 712.8 L931.6 715.4 L935.8 710.2" fill="none" stroke="#000" stroke-width="2" shape-rendering="geometricPrecision"/>
<text x="944.6" y="718" font-size="12" textLength="49.3" lengthAdjust="spacingAndGlyphs" >LiC 4 Plot</text>
<rect x="926" y="737" width="13" height="13" fill="#ffffff" />
<rect x="926" y="737" width="12" height="1" fill="#a0a0a0" />
<rect x="926" y="737" width="1" height="12" fill="#a0a0a0" />
<rect x="927" y="738" width="10" height="1" fill="#696969" />
<rect x="927" y="738" width="1" height="10" fill="#696969" />
<rect x="927" y="748" width="11" height="1" fill="#e3e3e3" />
<rect x="937" y="738" width="1" height="11" fill="#e3e3e3" />
<rect x="928" y="739" width="9" height="9" fill="#ffffff" />
<path d="M929.3 742.8 L931.6 745.4 L935.8 740.2" fill="none" stroke="#000" stroke-width="2" shape-rendering="geometricPrecision"/>
<text x="944.6" y="748" font-size="12" textLength="49.3" lengthAdjust="spacingAndGlyphs" >LiC 5 Plot</text>
<rect x="926" y="767" width="13" height="13" fill="#ffffff" />
<rect x="926" y="767" width="12" height="1" fill="#a0a0a0" />
<rect x="926" y="767" width="1" height="12" fill="#a0a0a0" />
<rect x="927" y="768" width="10" height="1" fill="#696969" />
<rect x="927" y="768" width="1" height="10" fill="#696969" />
<rect x="927" y="778" width="11" height="1" fill="#e3e3e3" />
<rect x="937" y="768" width="1" height="11" fill="#e3e3e3" />
<rect x="928" y="769" width="9" height="9" fill="#ffffff" />
<path d="M929.3 772.8 L931.6 775.4 L935.8 770.2" fill="none" stroke="#000" stroke-width="2" shape-rendering="geometricPrecision"/>
<text x="944.6" y="778" font-size="12" textLength="49.3" lengthAdjust="spacingAndGlyphs" >LiC 6 Plot</text>
<rect x="926" y="797" width="13" height="13" fill="#ffffff" />
<rect x="926" y="797" width="12" height="1" fill="#a0a0a0" />
<rect x="926" y="797" width="1" height="12" fill="#a0a0a0" />
<rect x="927" y="798" width="10" height="1" fill="#696969" />
<rect x="927" y="798" width="1" height="10" fill="#696969" />
<rect x="927" y="808" width="11" height="1" fill="#e3e3e3" />
<rect x="937" y="798" width="1" height="11" fill="#e3e3e3" />
<rect x="928" y="799" width="9" height="9" fill="#ffffff" />
<path d="M929.3 802.8 L931.6 805.4 L935.8 800.2" fill="none" stroke="#000" stroke-width="2" shape-rendering="geometricPrecision"/>
<text x="944.6" y="808" font-size="12" textLength="49.3" lengthAdjust="spacingAndGlyphs" >LiC 7 Plot</text>
<rect x="926" y="827" width="13" height="13" fill="#ffffff" />
<rect x="926" y="827" width="12" height="1" fill="#a0a0a0" />
<rect x="926" y="827" width="1" height="12" fill="#a0a0a0" />
<rect x="927" y="828" width="10" height="1" fill="#696969" />
<rect x="927" y="828" width="1" height="10" fill="#696969" />
<rect x="927" y="838" width="11" height="1" fill="#e3e3e3" />
<rect x="937" y="828" width="1" height="11" fill="#e3e3e3" />
<rect x="928" y="829" width="9" height="9" fill="#e6e6e6" />
<text x="944.6" y="838" font-size="12" fill="#7d7d7d" textLength="49.3" lengthAdjust="spacingAndGlyphs" >LiC 8 Plot</text>
<rect x="51" y="856" width="94" height="26" fill="#696969" />
<rect x="51" y="856" width="93" height="25" fill="#ffffff" />
<rect x="52" y="857" width="92" height="24" fill="#a0a0a0" />
<rect x="52" y="857" width="91" height="23" fill="#e3e3e3" />
<rect x="53" y="858" width="90" height="22" fill="#f0f0f0" />
<text x="65.5" y="873" font-size="12" textLength="64" lengthAdjust="spacingAndGlyphs" >Load history</text>
<rect x="151" y="856" width="94" height="26" fill="#696969" />
<rect x="151" y="856" width="93" height="25" fill="#ffffff" />
<rect x="152" y="857" width="92" height="24" fill="#a0a0a0" />
<rect x="152" y="857" width="91" height="23" fill="#e3e3e3" />
<rect x="153" y="858" width="90" height="22" fill="#f0f0f0" />
<text x="165.5" y="873" font-size="12" textLength="65.1" lengthAdjust="spacingAndGlyphs" >Clear history</text>
<rect x="0" y="896" width="1026" height="36" fill="#20232c" />
<rect x="-30" y="904.5" width="199" height="40" rx="14" fill="#45474c" stroke="#5c5e62" stroke-width="1" shape-rendering="geometricPrecision"/>
<text x="0" y="924.8" font-size="13" fill="#d6d6d6" textLength="27.8" lengthAdjust="spacingAndGlyphs" >edat</text>
<g shape-rendering="geometricPrecision">
<rect x="182" y="916" width="17" height="16" rx="2" fill="#6e6e6e"/><rect x="188" y="909" width="18" height="17" rx="2" fill="#f2f2f2"/><rect x="188" y="916" width="11" height="10" fill="#bdbdbd"/>
<defs><linearGradient id="edg" x1="0" y1="1" x2="1" y2="0"><stop offset="0" stop-color="#0a5fb4"/><stop offset="0.5" stop-color="#1e9be8"/><stop offset="1" stop-color="#5ad37a"/></linearGradient></defs><circle cx="238" cy="920.5" r="12" fill="url(#edg)"/><path d="M229 926 Q231 915 240 915 Q248 916 248 921 L241 921 Q237 921 237 925 Q238 930 246 930 Q240 934 233 931 Q229 929 229 926 Z" fill="#20232c" opacity="0.0"/><ellipse cx="240.5" cy="922" rx="4.5" ry="3.6" fill="#20232c"/><path d="M228 926 Q232 933 242 932 Q247 931 249 927" stroke="#0c4f9a" stroke-width="3.5" fill="none"/>
<ellipse cx="282" cy="920" rx="11" ry="12" fill="#e0101f"/><ellipse cx="282" cy="920" rx="4.5" ry="9" fill="#20232c"/>
<rect x="317" y="909" width="18" height="23" rx="1.5" fill="#6cc6ea"/><rect x="317" y="928" width="18" height="4" fill="#c8671f"/><rect x="317" y="927" width="18" height="1.5" fill="#f0f0f0"/><rect x="320" y="914" width="12" height="1.8" fill="#1a6e94"/><rect x="320" y="918" width="12" height="1.8" fill="#1a6e94"/><rect x="320" y="922" width="12" height="1.8" fill="#1a6e94"/><rect x="318" y="908" width="1.6" height="3" fill="#1a6e94"/><rect x="322" y="908" width="1.6" height="3" fill="#1a6e94"/><rect x="326" y="908" width="1.6" height="3" fill="#1a6e94"/><rect x="330" y="908" width="1.6" height="3" fill="#1a6e94"/>
<path d="M358 911 Q358 909 360 909 L366 909 L369 911 L382 911 L382 930 L358 930 Z" fill="#e0a010"/><rect x="358" y="913" width="24" height="17" rx="1" fill="#ffd35a"/><rect x="362.5" y="923" width="15" height="8" rx="1.5" fill="#1b74d6"/>
<path d="M403 925 Q400 912 414 909 Q426 908 425 917 Q424 921 419 921 Q415 922 417 927 Q418 932 411 932 Q404 931 403 925 Z" fill="#2aa3e6"/><circle cx="407" cy="920" r="1.8" fill="#e0402a"/><circle cx="411" cy="914" r="1.8" fill="#4caf50"/><circle cx="416" cy="912" r="1.8" fill="#ffc107"/><rect x="421" y="914" width="2.5" height="18" fill="#c28a4a"/><rect x="420.5" y="911" width="3.5" height="4" fill="#e8d9b0"/>
<rect x="450" y="909" width="14" height="17" rx="3" fill="#f4d36a"/><ellipse cx="457" cy="910" rx="7" ry="2.5" fill="#fbe7a0"/><path d="M447 932 L447 927 M447 932 L452 932 M468 909 L471 909 L471 913" stroke="#3aa64a" stroke-width="2"/><path d="M455 931 L469 917 M457 917 L469 931" stroke="#e0701a" stroke-width="2.6"/>
<rect x="493" y="909" width="18" height="23" rx="2" fill="#d9dde2"/><rect x="495" y="911" width="14" height="4" fill="#5bc2e8"/><rect x="495.0" y="917.0" width="2.8" height="2.6" fill="#4a5563"/><rect x="495.0" y="920.6" width="2.8" height="2.6" fill="#4a5563"/><rect x="495.0" y="924.2" width="2.8" height="2.6" fill="#4a5563"/><rect x="495.0" y="927.8" width="2.8" height="2.6" fill="#4a5563"/><rect x="498.7" y="917.0" width="2.8" height="2.6" fill="#4a5563"/><rect x="498.7" y="920.6" width="2.8" height="2.6" fill="#4a5563"/><rect x="498.7" y="924.2" width="2.8" height="2.6" fill="#4a5563"/><rect x="498.7" y="927.8" width="2.8" height="2.6" fill="#4a5563"/><rect x="502.4" y="917.0" width="2.8" height="2.6" fill="#4a5563"/><rect x="502.4" y="920.6" width="2.8" height="2.6" fill="#4a5563"/><rect x="502.4" y="924.2" width="2.8" height="2.6" fill="#4a5563"/><rect x="502.4" y="927.8" width="2.8" height="2.6" fill="#4a5563"/><rect x="506.1" y="917.0" width="2.8" height="2.6" fill="#4a5563"/><rect x="506.1" y="920.6" width="2.8" height="2.6" fill="#4a5563"/><rect x="506.1" y="924.2" width="2.8" height="2.6" fill="#4a5563"/><rect x="506.1" y="927.8" width="2.8" height="2.6" fill="#4a5563"/>
<path d="M534 915 L538 913 L552 926 L552 931 Z" fill="#8a5fd0"/><path d="M534 925 L538 927 L552 914 L552 909 Z" fill="#9b72de"/><path d="M534 915 L538 913 L538 927 L534 925 Z" fill="#7b4fc4"/><path d="M552 909 L558 912 L558 929 L552 932 Z" fill="#c79bf2"/>
<path d="M578 915 L582 912 L598 926 L596 930 Z" fill="#2b8fdd"/><path d="M578 925 L582 928 L598 914 L596 910 Z" fill="#1a6fc0"/><path d="M593 909 L601 912 L601 929 L593 932 Z" fill="#3ea6f2"/>
<rect x="622" y="909" width="23" height="23" rx="1.5" fill="#2746c0"/><rect x="627" y="909" width="13" height="7" fill="#e8eefa"/><rect x="635" y="910" width="3" height="5" fill="#2746c0"/><rect x="625" y="919" width="17" height="13" fill="#fbe3ea"/><rect x="627" y="922" width="13" height="1.5" fill="#e0607a"/><rect x="627" y="926" width="13" height="1.5" fill="#e0607a"/>
<g transform="rotate(40 678 920)"><rect x="669" y="913" width="18" height="14" rx="1.5" fill="#151515" stroke="#e8e020" stroke-width="1.6" stroke-dasharray="1.6 1.4"/></g><path d="M671 914 L685 927" stroke="#c8c8c8" stroke-width="3.2" stroke-linecap="round"/><circle cx="672" cy="914" r="3" fill="#c8c8c8"/><circle cx="672" cy="914" r="1.2" fill="#151515"/>
<rect x="709.5" y="910" width="23.5" height="20" fill="#0c0c0c" stroke="#8a8a8a" stroke-width="1"/><rect x="710" y="910" width="23" height="2.5" fill="#bfbfbf"/><text x="712" y="920" font-size="6" font-family="Liberation Mono" fill="#e6e6e6">C:\_</text><rect x="721" y="922" width="8" height="1.2" fill="#e6e6e6"/>
<rect x="755" y="909" width="22" height="14" fill="#e8e8e8" stroke="#8c8c8c" stroke-width="1"/><rect x="756" y="910" width="20" height="3" fill="#5a7bd0"/><path d="M754 921 L779 921 L779 932 L754 932 Z" fill="#d42a2a"/><rect x="762" y="918" width="9" height="3" fill="none" stroke="#a01010" stroke-width="1.5"/><rect x="754" y="925" width="25" height="1.2" fill="#8a0a0a"/>
<rect x="797.5" y="919" width="16" height="12" fill="#b7c3cc"/><rect x="798" y="927" width="16" height="1.5" fill="#6f7d88"/><path d="M805 909 L821 911 L820 926 L804 924 Z" fill="#dfe6ee"/><path d="M806.5 910.7 L819.5 912.4 L818.8 924 L805.8 922.5 Z" fill="#1d3fd0"/>
<rect x="842.5" y="909" width="22" height="17" fill="#e0e6ec"/><rect x="844.5" y="911" width="18" height="13" fill="#1d3fd0"/><path d="M846 914 L856 911 L862 911 L862 919 Z" fill="#6d8df0" opacity="0.7"/><rect x="850" y="926" width="7" height="3" fill="#c4ccd4"/><circle cx="860" cy="926" r="6" fill="#5fae4a" stroke="#e0e0e0" stroke-width="1.2"/><path d="M856.5 926 H863.5" stroke="#fff" stroke-width="1.3"/>
<circle cx="894" cy="918" r="8.5" fill="#2f7fd6"/><path d="M888 913 Q893 911 896 915 Q893 921 889 920 Z M896 920 Q901 919 900 925 Q896 926 895 923 Z" fill="#55b040"/><path d="M886 910 Q891 908 895 912" stroke="#f0c020" stroke-width="2.5" fill="none"/><rect x="899" y="916" width="11" height="16" fill="#cfd3d6"/><rect x="900" y="918" width="2.5" height="14" fill="#9aa0a5"/><rect x="904" y="919" width="4" height="1.2" fill="#6a7075"/>
<path d="M930 915 L948 919 L948 932 L930 932 Z" fill="#9c4a3a"/><path d="M930 918.0 L948 921.0" stroke="#c8a090" stroke-width="0.9"/><path d="M930 921.5 L948 924.2" stroke="#c8a090" stroke-width="0.9"/><path d="M930 925.0 L948 927.4" stroke="#c8a090" stroke-width="0.9"/><path d="M930 928.5 L948 930.6" stroke="#c8a090" stroke-width="0.9"/><circle cx="947" cy="916" r="6.5" fill="#2f86d6"/><path d="M943 913 Q947 911 949 914 Q947 918 944 917 Z" fill="#56b345"/>
<rect x="974" y="909" width="24" height="23" rx="3" fill="#3a8ee6"/><path d="M978 913 H984 Q988 913 988 917.5 Q988 922 984 922 H980 L986 929" stroke="#fff" stroke-width="2.6" fill="none"/><path d="M978 913 V929" stroke="#fff" stroke-width="2.6"/><text x="993" y="911" font-size="5" fill="#fff" transform="rotate(90 993 911)">vnc</text>
<path d="M1019 914 L1026 911 L1026 932 L1019 932 Z" fill="#2ec6df"/><path d="M1019 918 L1026 915 M1019 922 L1026 919 M1019 926 L1026 923" stroke="#a8f0fa" stroke-width="1"/>
</g>
</svg>
</body></html>
